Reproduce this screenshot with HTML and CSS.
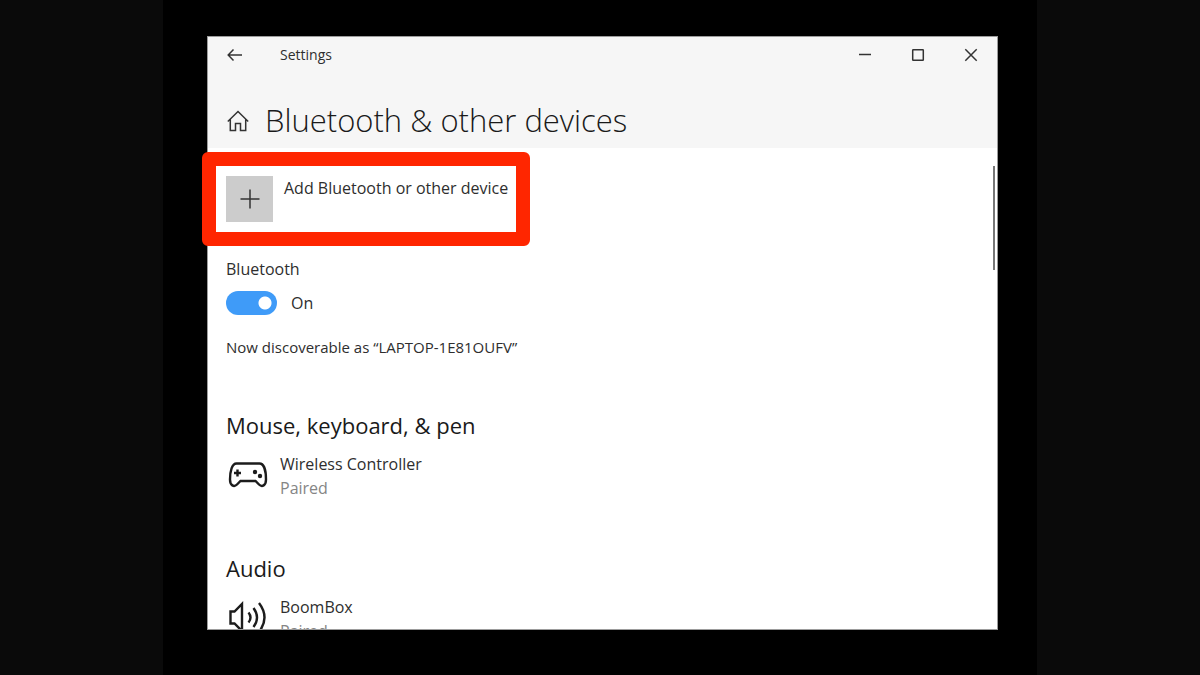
FILE: index.html
```html
<!DOCTYPE html>
<html lang="en">
<head>
<meta charset="utf-8">
<title>Settings</title>
<link rel="stylesheet" href="styles.css">
</head>
<body>
<div class="stage">
  <div class="window">
    <header class="header">
      <div class="titlebar">
        <button class="icon-button" aria-label="Back">
          <svg width="16" height="14" viewBox="0 0 16 14"><path d="M15 7H1.500M6.500 1.500L1.200 7L6.500 12.500"/></svg>
        </button>
        <span class="app-name">Settings</span>
        <div class="controls">
          <button class="icon-button" aria-label="Minimize">
            <svg width="14" height="14" viewBox="0 0 14 14"><path d="M1 6.500H13"/></svg>
          </button>
          <button class="icon-button" aria-label="Maximize">
            <svg width="14" height="14" viewBox="0 0 14 14"><rect x="1.700" y="1.700" width="10.600" height="10.600" rx=".5"/></svg>
          </button>
          <button class="icon-button" aria-label="Close">
            <svg width="14" height="14" viewBox="0 0 14 14"><path d="M1.300 1.300L12.700 12.700M12.700 1.300L1.300 12.700"/></svg>
          </button>
        </div>
      </div>
      <div class="heading">
        <a class="home" href="#" aria-label="Home">
          <svg width="22" height="22" viewBox="0 0 22 22"><path d="M.8 11.500L11 1.500L21.200 11.500M3.300 9.500V20.500H8.500V13.500H13.500V20.500H18.700V9.500"/></svg>
        </a>
        <h1 class="title">Bluetooth &amp; other devices</h1>
      </div>
    </header>
    <main class="content">
      <button class="add-device">
        <span class="add-tile">
          <svg width="20" height="20" viewBox="0 0 20 20"><path d="M10 .5V19.500M.5 10H19.500"/></svg>
        </span>
        <span>Add Bluetooth or other device</span>
      </button>
      <label class="label" for="bluetooth">Bluetooth</label>
      <div class="toggle-row">
        <input class="toggle" type="checkbox" role="switch" id="bluetooth" checked>
        <span>On</span>
      </div>
      <p class="status">Now discoverable as “LAPTOP-1E81OUFV”</p>

      <section class="group">
        <h2 class="group-title">Mouse, keyboard, &amp; pen</h2>
        <div class="device">
          <svg class="device-icon" width="40" height="46" viewBox="0 0 40 46">
            <path d="M8.500 11.500H31.500C36 11.500 38 19 38 27.500C38 33.500 34 35.500 31 32.500L27.500 29H12.500L9 32.500C6 35.500 2 33.500 2 27.500C2 19 4 11.500 8.500 11.500Z"/>
            <path d="M9.500 17.500V24.500M6 21H13"/>
            <circle class="dot" cx="27" cy="20" r="2.200"/><circle class="dot" cx="32" cy="24" r="2.200"/>
          </svg>
          <div>
            <div>Wireless Controller</div>
            <div class="muted">Paired</div>
          </div>
        </div>
      </section>

      <section class="group">
        <h2 class="group-title">Audio</h2>
        <div class="device">
          <svg class="device-icon" width="40" height="46" viewBox="0 0 40 46">
            <path d="M2.500 16.500H6.500L14 9V36L6.500 28.500H2.500Z"/>
            <path d="M20.500 17.500Q24.500 22.500 20.500 27.500M25.500 13Q32.500 22.500 25.500 32M31 8Q42 22.500 31 37"/>
          </svg>
          <div>
            <div>BoomBox</div>
            <div class="muted">Paired</div>
          </div>
        </div>
      </section>
      <div class="scroll-thumb"></div>
    </main>
  </div>
</div>
</body>
</html>
```

FILE: styles.css
```css
* { box-sizing: border-box; }

body {
  margin: 0;
  background: #0a0a0a;
  color: #2e2e2e;
  font: 16px/24px "Open Sans", "Noto Sans", sans-serif;
}

button {
  border: 0;
  padding: 0;
  background: none;
  color: inherit;
  font: inherit;
}

h1, h2, p { margin: 0; }

svg {
  display: block;
  flex: none;
  fill: none;
  stroke: #333;
  stroke-width: 1.5;
}

.stage {
  display: flex;
  width: 100%;
  max-width: 874px;
  height: 100vh;
  margin: 0 auto;
  padding: 36px 39px 45px 44px;
  background: #000;
}

.window {
  display: flex;
  flex: 1;
  flex-direction: column;
  min-width: 0;
  border: 1px solid #9c9c9c;
  background: #fff;
}

.header {
  flex: none;
  padding-bottom: 8px;
  background: #f6f6f6;
}

.titlebar {
  display: flex;
  align-items: center;
  height: 36px;
  padding: 0 19px;
}

.app-name {
  margin-left: 37px;
  font-size: 14px;
}

.controls {
  display: flex;
  gap: 39px;
  margin-left: auto;
}

.heading {
  display: flex;
  align-items: center;
  gap: 16px;
  padding: 27px 19px 0;
}

.home { margin-top: 2px; }

.title {
  color: #1a1a1a;
  font-size: 31px;
  font-weight: 300;
  line-height: 40px;
}

.content {
  position: relative;
  flex: 1;
  min-height: 0;
  padding: 28px 18px 0;
  overflow-x: visible;
  overflow-y: clip;
}

.add-device {
  position: relative;
  display: flex;
  gap: 11px;
  text-align: left;
}

.add-device::after {
  position: absolute;
  inset: -24px -22px -24px -24px;
  border: 14px solid #ff2600;
  border-radius: 6px;
  content: "";
}

.add-tile {
  display: grid;
  place-items: center;
  width: 47px;
  height: 46px;
  background: #ccc;
}

.label {
  display: block;
  margin-top: 35px;
}

.toggle-row {
  display: flex;
  align-items: center;
  gap: 14px;
  margin-top: 10px;
}

.toggle {
  width: 51px;
  height: 24px;
  margin: 0;
  border-radius: 12px;
  appearance: none;
  background: radial-gradient(circle at 39px 50%, #fff 6px, #3f9bf8 7px);
}

.status {
  margin-top: 20px;
  font-size: 15px;
}

.group { margin-top: 50px; }

.group + .group { margin-top: 52px; }

.group-title {
  color: #1a1a1a;
  font-size: 22px;
  font-weight: 400;
  line-height: 32px;
}

.device {
  display: flex;
  gap: 12px;
  margin-top: 11px;
  padding-left: 2px;
}

.device-icon {
  stroke: #1c1c1c;
  stroke-width: 2.4;
}

.dot {
  fill: #1c1c1c;
  stroke: none;
}

.muted { color: #858585; }

.scroll-thumb {
  position: absolute;
  top: 18px;
  right: 2px;
  width: 2px;
  height: 104px;
  background: #777;
}
```
